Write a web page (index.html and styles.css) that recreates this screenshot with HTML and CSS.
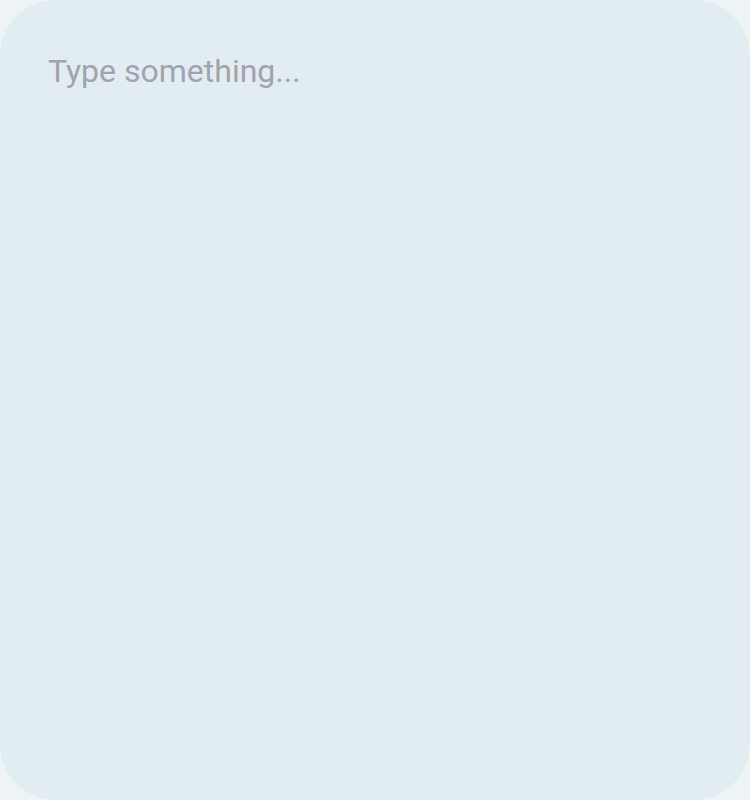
FILE: index.html
```html
<!DOCTYPE html>
<html>
<head>
<meta charset="utf-8">
<link rel="stylesheet" href="styles.css">
</head>
<body>
<div class="pad">
  <textarea class="note" placeholder="Type something..."></textarea>
</div>
</body>
</html>
```

FILE: styles.css
```css
html, body {
  margin: 0;
  padding: 0;
  background: #eef4f6;
}
.pad {
  width: 750px;
  height: 800px;
}
.note {
  display: block;
  box-sizing: border-box;
  width: 750px;
  height: 800px;
  margin: 0;
  border: none;
  outline: none;
  resize: none;
  border-radius: 56px;
  background: #e2edf1;
  padding: 52px 48px;
  font-family: Roboto, "Liberation Sans", sans-serif;
  font-size: 32px;
  line-height: 38px;
  color: #374151;
}
.note::placeholder {
  color: #a1a3b0;
  opacity: 1;
}
```
